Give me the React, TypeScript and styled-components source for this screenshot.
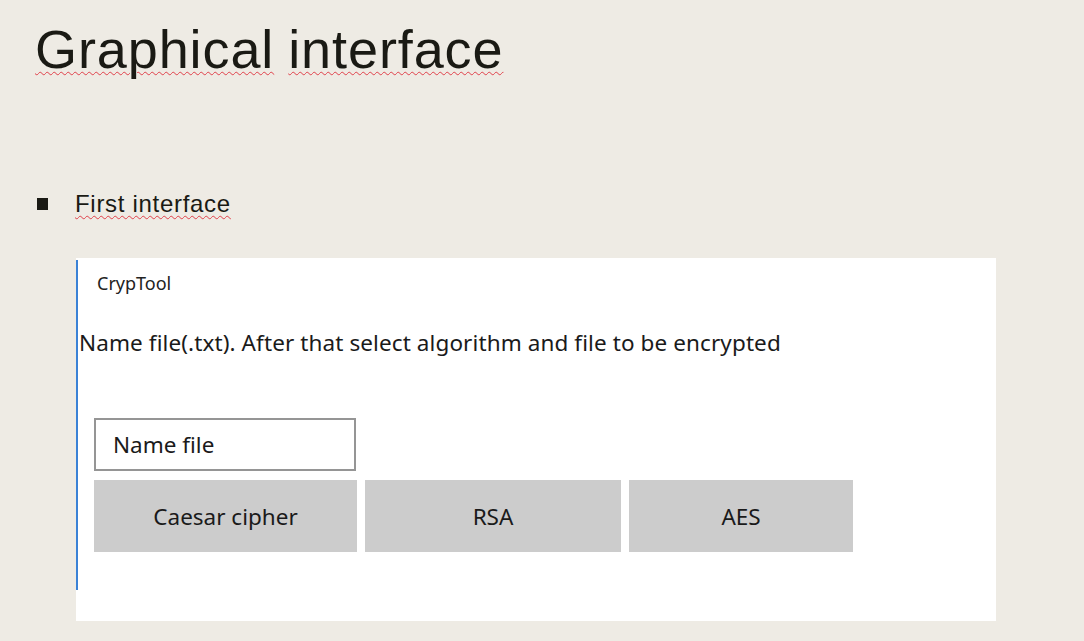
import React, { ReactElement } from 'react';
import styled, { createGlobalStyle } from 'styled-components';

const GlobalStyle = createGlobalStyle`
    html, body {
        margin: 0;
        padding: 0;
        background: #eeebe4;
    }
    body {
        width: 1084px;
        height: 641px;
        overflow: hidden;
        font-family: 'Liberation Sans', Arial, sans-serif;
    }
`;

const Slide = styled.main`
    width: 1084px;
    height: 641px;
    background: #eeebe4;
    padding: 18px 0 0 35px;
    box-sizing: border-box;
`;

const Title = styled.h1`
    margin: 0;
    font-family: 'Liberation Sans', Arial, sans-serif;
    font-weight: 400;
    font-size: 54px;
    line-height: 62px;
    color: #1a1a14;
    letter-spacing: 0.9px;
    display: flex;
    gap: 14px;
`;

const Misspelt = styled.span`
    text-decoration: underline wavy #e0404a;
    text-decoration-thickness: 1px;
    text-underline-offset: 3px;
`;

const Bullet = styled.div`
    display: flex;
    align-items: center;
    margin-top: 110px;
    gap: 27px;
`;

const Square = styled.span`
    width: 11px;
    height: 12px;
    background: #1a1a14;
    margin-left: 2px;
`;

const BulletText = styled.span`
    font-size: 24px;
    letter-spacing: 0.7px;
    color: #1a1a14;
    text-decoration: underline wavy #e0404a;
    text-decoration-thickness: 1px;
    text-underline-offset: 3px;
`;

const Shot = styled.section`
    margin: 40px 0 0 41px;
    width: 920px;
    height: 363px;
    background: #ffffff;
    padding-top: 2px;
    box-sizing: border-box;
    font-family: 'Noto Sans', 'Open Sans', sans-serif;
    color: #1a1a1a;
`;

const Window = styled.div`
    height: 330px;
    border-left: 2px solid #3b82d6;
    box-sizing: border-box;
`;

const WindowTitle = styled.div`
    font-size: 18px;
    line-height: 24px;
    padding: 11px 0 0 19px;
    color: #222;
`;

const Hint = styled.p`
    margin: 35px 0 0 1px;
    font-size: 22.5px;
    line-height: 26px;
    letter-spacing: 0.1px;
`;

const Controls = styled.div`
    margin: 62px 0 0 16px;
    display: flex;
    flex-direction: column;
    gap: 9px;
`;

const NameInput = styled.div`
    width: 262px;
    height: 53px;
    border: 2px solid #959595;
    box-sizing: border-box;
    font-size: 22.5px;
    padding-left: 17px;
    display: flex;
    align-items: center;
`;

const ButtonRow = styled.div`
    display: flex;
    gap: 8px;
`;

const AlgoButton = styled.div<{ $w: number }>`
    width: ${({ $w }): string => `${$w}px`};
    height: 72px;
    background: #cccccc;
    display: flex;
    align-items: center;
    justify-content: center;
    font-size: 22.5px;
    color: #1a1a1a;
`;

const algorithms = [
    { name: 'Caesar cipher', width: 263 },
    { name: 'RSA', width: 256 },
    { name: 'AES', width: 224 },
];

const App = (): ReactElement => {
    return (
        <>
            <GlobalStyle />
            <Slide>
                <Title>
                    <Misspelt>Graphical</Misspelt>
                    <Misspelt>interface</Misspelt>
                </Title>
                <Bullet>
                    <Square />
                    <BulletText>First interface</BulletText>
                </Bullet>
                <Shot>
                    <Window>
                        <WindowTitle>CrypTool</WindowTitle>
                        <Hint>Name file(.txt). After that select algorithm and file to be encrypted</Hint>
                        <Controls>
                            <NameInput>Name file</NameInput>
                            <ButtonRow>
                                {algorithms.map((a) => (
                                    <AlgoButton key={a.name} $w={a.width}>
                                        {a.name}
                                    </AlgoButton>
                                ))}
                            </ButtonRow>
                        </Controls>
                    </Window>
                </Shot>
            </Slide>
        </>
    );
};

export default App;
